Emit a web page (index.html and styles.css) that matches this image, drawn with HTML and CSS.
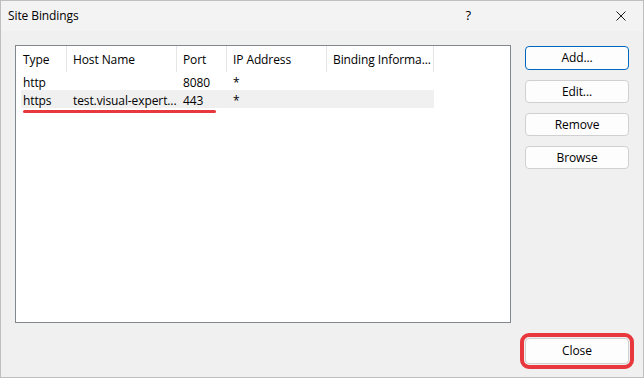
FILE: index.html
```html
<!DOCTYPE html>
<html lang="en">
<head>
    <meta charset="UTF-8">
    <title>Site Bindings</title>
    <link rel="stylesheet" href="styles.css">
</head>
<body>
    <div class="dialog">
        <div class="titlebar">
            <span class="title">Site Bindings</span>
            <span class="help">?</span>
            <svg class="close-x" width="10" height="10" viewBox="0 0 10 10">
                <path d="M0.5 0.5 L9.5 9.5 M9.5 0.5 L0.5 9.5" stroke="#1a1a1a" stroke-width="1" fill="none"/>
            </svg>
        </div>

        <div class="content">
            <div class="top-row">
                <div class="listview">
                    <div class="header">
                        <div class="col c-type">Type</div>
                        <div class="col c-host">Host Name</div>
                        <div class="col c-port">Port</div>
                        <div class="col c-ip">IP Address</div>
                        <div class="col c-info">Binding Informa...</div>
                    </div>
                    <div class="row">
                        <div class="col c-type">http</div>
                        <div class="col c-host"></div>
                        <div class="col c-port">8080</div>
                        <div class="col c-ip">*</div>
                        <div class="col c-info"></div>
                    </div>
                    <div class="row selected">
                        <div class="col c-type">https</div>
                        <div class="col c-host">test.visual-expert...</div>
                        <div class="col c-port">443</div>
                        <div class="col c-ip">*</div>
                        <div class="col c-info"></div>
                        <div class="mark-line"></div>
                    </div>
                </div>

                <div class="side-buttons">
                    <button class="btn default">Add...</button>
                    <button class="btn">Edit...</button>
                    <button class="btn">Remove</button>
                    <button class="btn">Browse</button>
                </div>
            </div>

            <div class="bottom-row">
                <button class="btn btn-close">Close</button>
            </div>
        </div>
    </div>
</body>
</html>
```

FILE: styles.css
```css
body {
    margin: 0;
    padding: 0;
    font-family: "Open Sans", "Noto Sans", Arial, sans-serif;
    font-size: 12px;
    letter-spacing: -0.1px;
    color: #000;
}

.dialog {
    width: 644px;
    height: 378px;
    box-sizing: border-box;
    border: 1px solid #bfbfbf;
    background-color: #f0f0f0;
    display: flex;
    flex-direction: column;
}

.titlebar {
    height: 30px;
    background-color: #f3f3f3;
    display: flex;
    align-items: center;
    padding-left: 7px;
}

.title {
    flex: 1;
    margin-top: -1px;
}

.help {
    font-size: 13px;
    margin-right: 145px;
    margin-top: -2px;
}

.close-x {
    margin-right: 17px;
    margin-top: -1px;
}

.content {
    flex: 1;
    display: flex;
    flex-direction: column;
    padding: 14px 14px 13px 14px;
}

.top-row {
    display: flex;
    gap: 14px;
}

.listview {
    position: relative;
    width: 496px;
    height: 278px;
    box-sizing: border-box;
    border: 1px solid #828790;
    background-color: #fff;
}

.header {
    display: flex;
    height: 26px;
}

.header .col {
    border-right: 1px solid #e5e5e5;
    line-height: 27px;
    padding-left: 6px;
}

.header .c-type {
    padding-left: 7px;
}

.row {
    position: relative;
    display: flex;
    height: 18px;
    box-sizing: border-box;
    padding-top: 2px;
    line-height: 18px;
    margin-left: 5px;
    width: 413px;
}

.row .col {
    padding-left: 6px;
}

.row .c-type {
    padding-left: 2px;
}

.row.selected {
    background-color: #f0f0f0;
}

.col {
    box-sizing: border-box;
    white-space: nowrap;
    overflow: hidden;
    flex-shrink: 0;
}

.header .c-type { width: 51px; }
.row .c-type { width: 46px; }
.c-host { width: 110px; }
.c-port { width: 50px; }
.c-ip { width: 100px; }
.c-info { width: 107px; }

/* red annotation under the https row */
.mark-line {
    position: absolute;
    left: 2px;
    top: 20px;
    width: 193px;
    height: 3px;
    border-radius: 2px;
    background-color: #e8383d;
}

.side-buttons {
    display: flex;
    flex-direction: column;
    gap: 10px;
    padding-top: 1px;
}

.btn {
    width: 104px;
    height: 23px;
    box-sizing: border-box;
    font-family: inherit;
    font-size: 12px;
    letter-spacing: -0.1px;
    color: #000;
    background-color: #fdfdfd;
    border: 1px solid #d0d0d0;
    border-radius: 4px;
    padding: 0 0 1px 0;
}

.btn.default {
    height: 24px;
    border-color: #0067c0;
}

.bottom-row {
    display: flex;
    justify-content: flex-end;
    margin-top: 15px;
}

.btn-close {
    height: 26px;
    outline: 4px solid #e8383d;
    outline-offset: 1px;
}
```
